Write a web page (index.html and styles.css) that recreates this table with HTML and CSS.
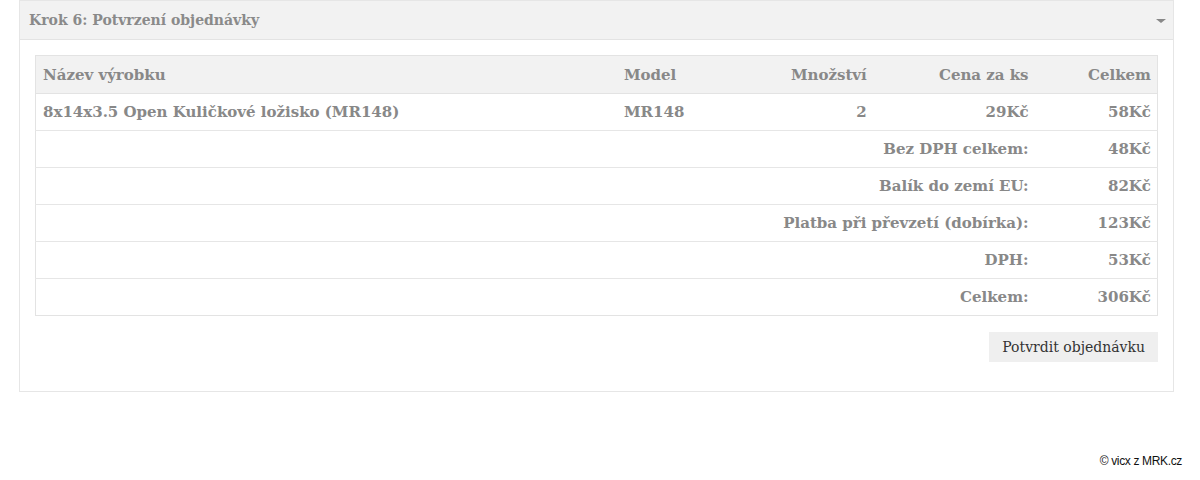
FILE: index.html
```html
<!DOCTYPE html>
<html lang="cs">
<head>
<meta charset="utf-8">
<title>Krok 6</title>
<link rel="stylesheet" href="styles.css">
</head>
<body>
<div class="panel">
  <div class="panel-head">
    <span class="panel-title">Krok 6: Potvrzení objednávky</span>
    <span class="caret"></span>
  </div>
  <div class="panel-body">
    <table class="order">
      <colgroup>
        <col class="c-name"><col class="c-model"><col class="c-qty"><col class="c-price"><col class="c-total">
      </colgroup>
      <thead>
        <tr><th class="l first">Název výrobku</th><th class="l">Model</th><th class="r">Množství</th><th class="r">Cena za ks</th><th class="r last">Celkem</th></tr>
      </thead>
      <tbody>
        <tr><td class="l first">8x14x3.5 Open Kuličkové ložisko (MR148)</td><td class="l">MR148</td><td class="r">2</td><td class="r">29Kč</td><td class="r last">58Kč</td></tr>
      </tbody>
      <tfoot>
        <tr><td colspan="4" class="r">Bez DPH celkem:</td><td class="r last">48Kč</td></tr>
        <tr><td colspan="4" class="r">Balík do zemí EU:</td><td class="r last">82Kč</td></tr>
        <tr><td colspan="4" class="r">Platba při převzetí (dobírka):</td><td class="r last">123Kč</td></tr>
        <tr><td colspan="4" class="r">DPH:</td><td class="r last">53Kč</td></tr>
        <tr><td colspan="4" class="r">Celkem:</td><td class="r last">306Kč</td></tr>
      </tfoot>
    </table>
    <div class="actions">
      <button class="btn" type="button">Potvrdit objednávku</button>
    </div>
  </div>
</div>
<div class="footer">© vicx z MRK.cz</div>
</body>
</html>
```
FILE: styles.css
```css
html, body {
  margin: 0;
  padding: 0;
  background: #fff;
}
body {
  font-family: "DejaVu Serif", serif;
  color: #888;
}
.panel {
  margin: 0 26px 0 19px;
  border: 1px solid #e6e6e6;
}
.panel-head {
  height: 38px;
  background: #f2f2f2;
  border-bottom: 1px solid #e3e3e3;
  display: flex;
  align-items: center;
  justify-content: space-between;
  padding: 0 9px;
}
.panel-title {
  font-size: 14px;
  font-weight: bold;
  color: #8a8a8a;
}
.caret {
  width: 0;
  height: 0;
  border-left: 5px solid transparent;
  border-right: 5px solid transparent;
  border-top: 4px solid #888;
  margin-top: 2px;
  margin-right: -2px;
}
.panel-body {
  padding: 15px 15px 29px;
}
.order {
  width: 100%;
  border-collapse: collapse;
  border: 1px solid #e3e3e3;
  font-size: 15px;
  font-weight: bold;
  color: #888;
}
.c-name { width: 581px; }
.c-model { width: 100px; }
.c-qty { width: 159px; }
.c-price { width: 162px; }
.c-total { width: 121px; }
.order th, .order td {
  height: 36px;
  padding: 0 8px;
  border-top: 1px solid #e6e6e6;
  white-space: nowrap;
}
.order .first { padding-left: 7px; }
.order .last { padding-right: 6px; }
.order thead th {
  background: #f2f2f2;
  border-top: none;
  height: 37px;
  border-bottom: 1px solid #e3e3e3;
}
.order .l { text-align: left; }
.order .r { text-align: right; }
.actions {
  display: flex;
  justify-content: flex-end;
  margin-top: 16px;
}
.btn {
  font-family: "DejaVu Serif", serif;
  font-size: 14px;
  color: #333;
  background: #efefef;
  border: none;
  height: 30px;
  padding: 0 13px;
  margin: 0;
}
.footer {
  position: absolute;
  right: 18px;
  top: 454px;
  font-family: "Liberation Sans", Arial, sans-serif;
  font-size: 12px;
  letter-spacing: -0.35px;
  color: #111;
}
```
